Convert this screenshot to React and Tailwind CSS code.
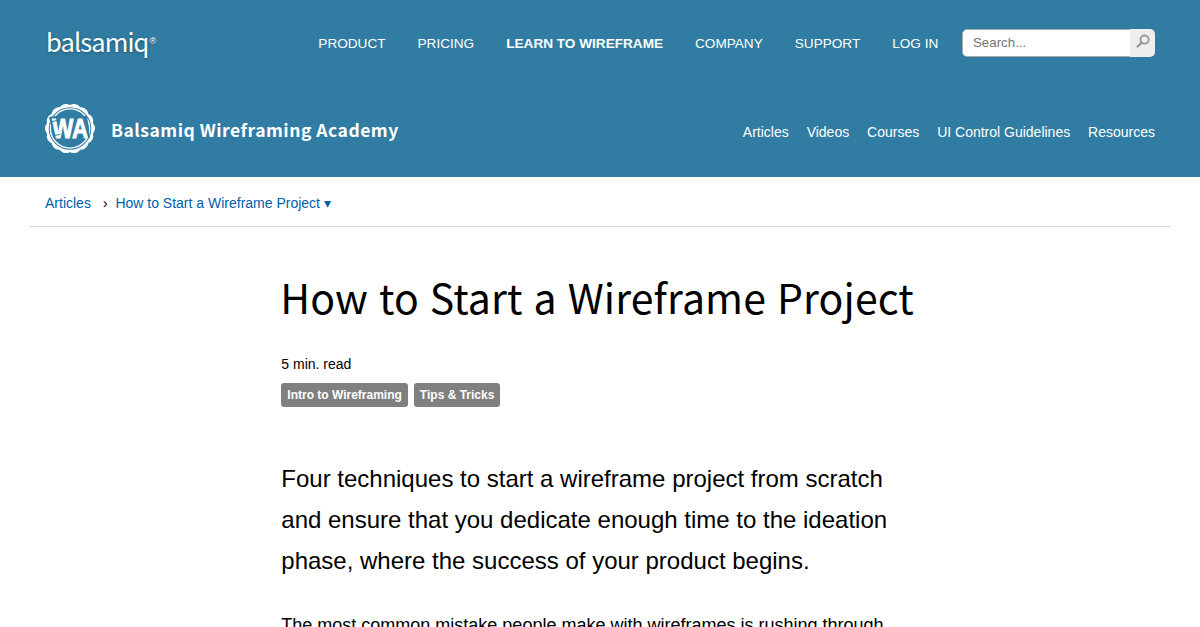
import React from "react";

const primaryNav = [
  { label: "PRODUCT" },
  { label: "PRICING" },
  { label: "LEARN TO WIREFRAME", active: true },
  { label: "COMPANY" },
  { label: "SUPPORT" },
  { label: "LOG IN" },
];

const academyNav = ["Articles", "Videos", "Courses", "UI Control Guidelines", "Resources"];

const tags = ["Intro to Wireframing", "Tips & Tricks"];

const scallops = Array.from({ length: 14 }, (_, i) => {
  const a = (i * Math.PI) / 7;
  return { x: 25 + 17.6 * Math.cos(a), y: 24.5 + 17.6 * Math.sin(a) };
});

function AcademyBadge() {
  return (
    <svg viewBox="0 0 50 50" className="h-[50px] w-[50px] shrink-0" aria-hidden="true">
      <g fill="#fff">
        <circle cx="25" cy="24.5" r="23.5" />
        {scallops.map((s, i) => (
          <circle key={i} cx={s.x} cy={s.y} r="7.4" />
        ))}
      </g>
      <circle cx="25" cy="24.5" r="21.3" fill="#317ca2" />
      <circle cx="25" cy="24.5" r="19.6" fill="none" stroke="#fff" strokeWidth="1.4" />
      <path d="M4 13 L11 12 L12 22 L15 35 L9 35 Z M38 12 L42 12 L45 34 L41 35 Z" fill="#317ca2" />
      <text
        x="7.2"
        y="34.2"
        textLength="36"
        lengthAdjust="spacingAndGlyphs"
        className="font-['Liberation_Sans',Arial,sans-serif] text-[28px] font-bold"
        fill="#fff"
        stroke="#fff"
        strokeWidth="0.9"
      >
        WA
      </text>
      <path d="M6 17.8 L12.4 16.4 M9.5 31.6 L15 30.3" stroke="#317ca2" strokeWidth="1" />
    </svg>
  );
}

function SearchIcon() {
  return (
    <svg viewBox="0 0 14 14" className="h-[14px] w-[14px]" fill="none" stroke="#999" aria-hidden="true">
      <circle cx="8.6" cy="5.6" r="4.1" strokeWidth="1.8" />
      <path d="M5.6 8.6 L1 13.2" strokeWidth="2.3" />
    </svg>
  );
}

export default function App() {
  return (
    <div className="h-[627px] overflow-hidden bg-white font-['Liberation_Sans',Arial,sans-serif] text-black">
      <header className="h-[177px] bg-[#317ca2] px-[45px] text-white">
        <div className="flex h-[86px] items-center">
          <div className="flex items-start pl-px leading-none [text-shadow:0_1px_3px_rgba(0,0,0,0.3)]">
            <span className="-mt-[5px] font-['Noto_Sans_CJK_SC',sans-serif] text-[25.5px] leading-[28px] tracking-[-0.9px]">balsamiq</span>
            <span className="ml-px pt-[5px] text-[9px] leading-none">®</span>
          </div>
          <nav className="ml-auto flex gap-8 pt-0.5 text-[13.6px] leading-5">
            {primaryNav.map((item) => (
              <a key={item.label} className={item.active ? "font-bold" : ""}>
                {item.label}
              </a>
            ))}
          </nav>
          <div className="ml-[23.7px] flex h-7 w-[193px] overflow-hidden rounded-[5px]">
            <div className="flex flex-1 items-center rounded-l-[5px] border border-r-0 border-[#aaa] bg-white pl-[10px] text-[13.3px] text-[#757575]">
              Search...
            </div>
            <div className="flex w-[25px] items-start justify-center bg-[#eee] pt-[5px]">
              <SearchIcon />
            </div>
          </div>
        </div>
        <div className="flex h-[86px] items-center">
          <AcademyBadge />
          <span className="ml-4 pt-0.5 font-['Noto_Sans_CJK_SC',sans-serif] text-[17.5px] leading-6 font-bold tracking-[0.5px]">
            Balsamiq Wireframing Academy
          </span>
          <nav className="ml-auto flex gap-[17.9px] pt-1.5 text-[14px] leading-5">
            {academyNav.map((label) => (
              <a key={label}>{label}</a>
            ))}
          </nav>
        </div>
      </header>

      <div className="mx-[30px] flex h-[50px] items-center border-b border-[#d9d9d9] px-[15px] pb-px pt-1 text-[14px] leading-5 text-[#0060a9]">
        <a>Articles</a>
        <span className="ml-3 mr-[7.8px] text-black">›</span>
        <a>How to Start a Wireframe Project ▾</a>
      </div>

      <main className="ml-[281.3px] w-[640px]">
        <h1 className="-ml-px mt-[39px] h-[60px] whitespace-nowrap font-['Noto_Sans_CJK_SC',sans-serif] text-[41px] leading-[60px] tracking-[0.1px] [word-spacing:1.7px]">
          How to Start a Wireframe Project
        </h1>
        <p className="mt-[28px] text-[14px] leading-5">5 min. read</p>
        <div className="mt-[9px] flex gap-1.5">
          {tags.map((tag) => (
            <span key={tag} className="h-6 rounded-[3px] bg-[#808080] px-1.5 text-[12px] leading-6 font-bold text-white">
              {tag}
            </span>
          ))}
        </div>
        <p className="mt-[51px] text-[24px] leading-[41px]">
          Four techniques to start a wireframe project from scratch
          <br />
          and ensure that you dedicate enough time to the ideation
          <br />
          phase, where the success of your product begins.
        </p>
        <p className="mt-[29px] whitespace-nowrap text-[18px] leading-[31px]">
          The most common mistake people make with wireframes is rushing through
        </p>
      </main>
    </div>
  );
}
